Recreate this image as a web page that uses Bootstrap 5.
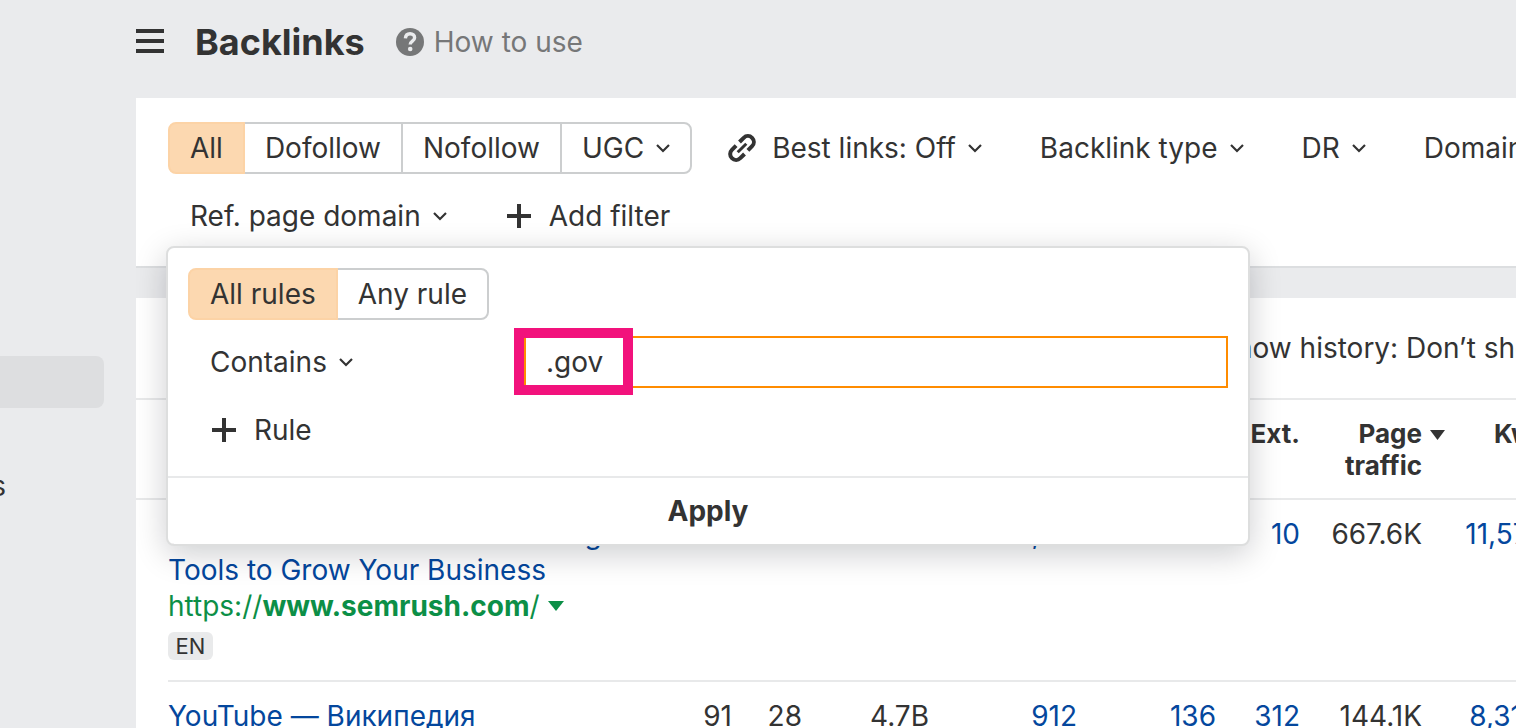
<!DOCTYPE html>
<html lang="en">
<head>
<meta charset="utf-8">
<meta name="viewport" content="width=device-width, initial-scale=1">
<title>Backlinks</title>
<link href="https://cdn.jsdelivr.net/npm/bootstrap@5.3.0/dist/css/bootstrap.min.css" rel="stylesheet">
<style>
  body { background: #eaebed; color: #333; font-family: Inter, "Liberation Sans", sans-serif; font-size: 28px; line-height: 36px; }
  svg { flex: none; display: block; }
  a { text-decoration: none; color: #04479d; }
  .side { width: 136px; padding-top: 356px; }
  .side-item { height: 52px; color: #333; }
  .side-item.active { width: 104px; background: #dddee0; border-radius: 0 8px 8px 0; }
  .side-cut { width: 6px; white-space: nowrap; }
  .workspace { min-width: 0; }
  .topbar { height: 84px; gap: 31px; }
  .page-title { font-size: 36px; line-height: 44px; font-weight: 700; }
  .help { color: #767778; gap: 10px; }
  .panel { background: #fff; }
  .filters { margin-top: 14px; padding: 24px 32px; gap: 16px; border-bottom: 2px solid #dcdee0; }
  .filter-row { gap: 14px; }
  .tool { --bs-btn-color: #333; --bs-btn-hover-color: #333; --bs-btn-border-width: 2px; --bs-btn-border-color: transparent;
    --bs-btn-padding-x: 20px; --bs-btn-padding-y: 6px; --bs-btn-font-size: 28px; --bs-btn-line-height: 36px;
    --bs-btn-border-radius: 8px; display: flex; align-items: center; gap: 12px; height: 52px; white-space: nowrap; flex: none; }
  .tool-label { gap: 12px; }
  .icon-tool { gap: 16px; }
  .seg .tool { --bs-btn-border-color: #cccecf; flex: none; }
  .seg .tool.active { background: #fcd8b0; border-color: #fcd3a6; color: #333; }
  .btn-group.seg > .btn:not(:first-child) { margin-left: -2px; }
  .rules-menu { left: -2px; top: 100%; margin-top: 4px; width: 1084px; padding: 0; border: 2px solid #dddede; border-radius: 8px;
    box-shadow: 0 8px 32px rgba(0, 10, 20, .2); font-size: 28px; color: #333; }
  .rules-body { padding: 20px; gap: 16px; }
  .rule-kind { width: 336px; }
  .rule-input { height: 52px; padding: 6px 20px; border: 2px solid #ff8c00; border-radius: 0; font-size: 28px; line-height: 36px; color: #333; }
  .rule-input:focus { box-shadow: none; border-color: #ff8c00; }
  .marker { left: -10px; top: -8px; width: 119px; height: 67px; border: 10px solid #f2127c; pointer-events: none; }
  .apply { height: 68px; border: 0; border-top: 2px solid #e8e9ea; border-radius: 0; font-size: 28px; font-weight: 700; color: #333; }
  .results { margin-top: 30px; }
  .results-bar { height: 102px; padding-left: 1082px; white-space: nowrap; border-bottom: 2px solid #e8e9ea; }
  .links { table-layout: fixed; width: 1404px; }
  .links th, .links td { padding: 16px 0; text-align: right; vertical-align: top; border-bottom: 2px solid #e8e9ea; }
  .links th { font-size: 26px; line-height: 32px; font-weight: 700; padding-top: 18px; }
  .links td:first-child { border-bottom: 0; }
  .links th:nth-child(2), .links td:nth-child(2) { text-align: left; padding-right: 60px; }
  .links tr:first-child td { padding-bottom: 20px; }
  .c-pad { width: 32px; } .c-page { width: 500px; } .c-dr { width: 64px; } .c-ur { width: 70px; } .c-dom { width: 127px; }
  .c-ref { width: 148px; } .c-out { width: 139px; } .c-ext { width: 84px; } .c-traf { width: 122px; } .c-kw { width: 118px; }
  .sort { left: 100%; top: 12px; margin-left: 8px; }
  .green { color: #0c8f47; gap: 8px; }
  .lang { display: block; width: 45px; height: 28px; margin-top: 8px; border-radius: 6px; background: #e9eaeb; font-size: 22px; line-height: 28px; text-align: center; }
</style>
</head>
<body class="vh-100 overflow-hidden">
<div class="d-flex h-100">
  <nav class="side flex-shrink-0" aria-label="Sections">
    <a class="side-item active d-block" href="#" aria-label="Backlinks"></a>
    <div class="side-item"></div>
    <a class="side-item side-cut d-flex align-items-center justify-content-end" href="#">s</a>
  </nav>

  <main class="workspace flex-grow-1 overflow-hidden">
    <header class="topbar d-flex align-items-center">
      <button class="btn p-0 border-0" type="button" aria-label="Menu">
        <svg width="28" height="28" viewBox="0 0 28 28" fill="#333"><path d="M0 1h28v4H0zM0 11h28v4H0zM0 21h28v4H0z"/></svg>
      </button>
      <h1 class="page-title m-0">Backlinks</h1>
      <a class="help d-flex align-items-center" href="#">
        <svg width="28" height="28" viewBox="0 0 28 28"><circle cx="14" cy="14" r="14" fill="#767778"/><path d="M9.400 10.400c.2-2.900 2-4.600 4.700-4.600 2.700 0 4.500 1.600 4.500 3.900 0 3.500-4.400 3.300-4.400 6.800" fill="none" stroke="#eaebed" stroke-width="3.400"/><circle cx="14.200" cy="21" r="2.300" fill="#eaebed"/></svg>
        How to use
      </a>
    </header>

    <section class="panel filters d-flex flex-column">
      <div class="filter-row d-flex">
        <div class="btn-group seg flex-shrink-0" role="group" aria-label="Link follow type">
          <button class="btn tool active" type="button">All</button>
          <button class="btn tool" type="button">Dofollow</button>
          <button class="btn tool" type="button">Nofollow</button>
          <button class="btn tool" type="button">UGC <svg width="14" height="14" viewBox="0 0 14 14" fill="none" stroke="#333" stroke-width="2.200"><path d="M1 4l6 6 6-6"/></svg></button>
        </div>
        <button class="btn tool icon-tool" type="button">
          <svg width="28" height="28" viewBox="0 0 28 28" fill="none" stroke="#333" stroke-width="4"><path d="M11.500 8l4.200-4.200a5.900 5.900 0 0 1 8.400 8.400l-4.200 4.200M16.500 20l-4.200 4.200a5.900 5.900 0 0 1-8.400-8.400l4.200-4.200"/><path d="M9.700 18.300l8.600-8.600" stroke-width="3"/></svg>
          <span class="tool-label d-flex align-items-center">Best links: Off <svg width="14" height="14" viewBox="0 0 14 14" fill="none" stroke="#333" stroke-width="2.200"><path d="M1 4l6 6 6-6"/></svg></span>
        </button>
        <button class="btn tool" type="button">Backlink type <svg width="14" height="14" viewBox="0 0 14 14" fill="none" stroke="#333" stroke-width="2.200"><path d="M1 4l6 6 6-6"/></svg></button>
        <button class="btn tool" type="button">DR <svg width="14" height="14" viewBox="0 0 14 14" fill="none" stroke="#333" stroke-width="2.200"><path d="M1 4l6 6 6-6"/></svg></button>
        <button class="btn tool" type="button">Domain traffic</button>
      </div>

      <div class="filter-row d-flex">
        <div class="position-relative">
          <button class="btn tool" type="button" aria-expanded="true">Ref. page domain <svg width="14" height="14" viewBox="0 0 14 14" fill="none" stroke="#333" stroke-width="2.200"><path d="M1 4l6 6 6-6"/></svg></button>
          <form class="dropdown-menu show rules-menu">
            <div class="rules-body d-flex flex-column">
              <div class="d-flex">
                <div class="btn-group seg" role="group" aria-label="Rule matching">
                  <button class="btn tool active" type="button">All rules</button>
                  <button class="btn tool" type="button">Any rule</button>
                </div>
              </div>
              <div class="d-flex">
                <div class="rule-kind flex-shrink-0">
                  <button class="btn tool" type="button">Contains <svg width="14" height="14" viewBox="0 0 14 14" fill="none" stroke="#333" stroke-width="2.200"><path d="M1 4l6 6 6-6"/></svg></button>
                </div>
                <div class="position-relative flex-grow-1">
                  <input class="form-control rule-input" type="text" value=".gov" aria-label="Domain contains">
                  <div class="marker position-absolute"></div>
                </div>
              </div>
              <div class="d-flex">
                <button class="btn tool icon-tool" type="button"><svg width="28" height="28" viewBox="0 0 28 28" fill="#333"><path d="M12 2h4v10h10v4H16v10h-4V16H2v-4h10z"/></svg> Rule</button>
              </div>
            </div>
            <button class="btn apply w-100" type="button">Apply</button>
          </form>
        </div>
        <button class="btn tool icon-tool" type="button"><svg width="28" height="28" viewBox="0 0 28 28" fill="#333"><path d="M12 2h4v10h10v4H16v10h-4V16H2v-4h10z"/></svg> Add filter</button>
      </div>
    </section>

    <section class="panel results">
      <div class="results-bar d-flex align-items-center">Show history: Don’t show</div>
      <table class="links">
        <colgroup><col class="c-pad"><col class="c-page"><col class="c-dr"><col class="c-ur"><col class="c-dom"><col class="c-ref"><col class="c-out"><col class="c-ext"><col class="c-traf"><col class="c-kw"></colgroup>
        <thead>
          <tr><th></th><th></th><th></th><th></th><th></th><th></th><th></th><th>Ext.</th>
            <th><span class="position-relative">Page<svg class="sort position-absolute" width="15" height="11" viewBox="0 0 15 11" fill="#333"><path d="M0 0h15L7.500 10z"/></svg></span><br>traffic</th><th>Kw.</th></tr>
        </thead>
        <tbody>
          <tr>
            <td></td>
            <td><a href="#">Semrush: Data-Driven Marketing Tools to Grow Your Business</a><br>
              <a class="green d-inline-flex align-items-center" href="#"><span>https://<b>www.semrush.com</b>/</span><svg width="16" height="10" viewBox="0 0 16 10" fill="#0c8f47"><path d="M0 0h16L8 10z"/></svg></a>
              <span class="lang">EN</span></td>
            <td></td><td></td><td></td><td><a href="#">14,115</a></td><td></td><td><a href="#">10</a></td><td>667.6K</td><td><a href="#">11,571</a></td>
          </tr>
          <tr>
            <td></td><td><a href="#">YouTube — Википедия</a></td>
            <td>91</td><td>28</td><td>4.7B</td><td><a href="#">912</a></td><td><a href="#">136</a></td><td><a href="#">312</a></td><td>144.1K</td><td><a href="#">8,314</a></td>
          </tr>
        </tbody>
      </table>
    </section>
  </main>
</div>
<script src="https://cdn.jsdelivr.net/npm/bootstrap@5.3.0/dist/js/bootstrap.bundle.min.js"></script>
</body>
</html>
